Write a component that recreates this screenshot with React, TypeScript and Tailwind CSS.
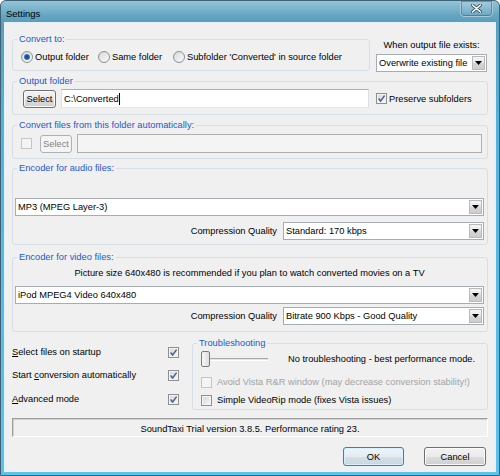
import React from "react";

/* ── small Vista-style controls ── */
function Check({
  checked = false,
  disabled = false,
  className = "",
}: {
  checked?: boolean;
  disabled?: boolean;
  className?: string;
}) {
  return (
    <span
      className={`w-[11px] h-[11px] shrink-0 flex items-center justify-center border ${
        disabled
          ? "border-[#c6c6c6] bg-[#f4f4f4]"
          : "border-[#8e8f8f] bg-[linear-gradient(135deg,#d3d6db,#f7f7f7)] shadow-[inset_0_0_0_1px_#f4f4f4]"
      } ${className}`}
    >
      {checked && (
        <svg width="9" height="9" viewBox="0 0 9 9">
          <path
            d="M1.6 4.6 L3.6 7 L7.6 1.6"
            fill="none"
            stroke="#4b5f8d"
            strokeWidth="1.5"
          />
        </svg>
      )}
    </span>
  );
}

function Radio({ checked = false }: { checked?: boolean }) {
  return (
    <span className="w-[12px] h-[12px] shrink-0 rounded-full border border-[#8e8f8f] bg-[linear-gradient(135deg,#d5d8dd,#fbfbfb)] flex items-center justify-center">
      {checked && (
        <span className="w-[6px] h-[6px] rounded-full bg-[radial-gradient(circle,#0f3f86_0%,#2a67b4_55%,#8cc3e8_100%)]" />
      )}
    </span>
  );
}

function Combo({ value, className = "" }: { value: string; className?: string }) {
  return (
    <div
      className={`h-[18px] flex items-center bg-white border border-[#a5acb5] ${className}`}
    >
      <span className="flex-1 pl-[2px] whitespace-nowrap">{value}</span>
      <span className="w-[13px] h-[14px] mr-[1px] shrink-0 flex items-center justify-center border border-[#b9b9b9] bg-[linear-gradient(180deg,#f5f5f5_0%,#e6e6e6_50%,#d6d6d6_50%,#cdcdcd_100%)]">
        <svg width="7" height="4" viewBox="0 0 7 4">
          <path d="M0 0h7L3.5 4z" fill="#000" />
        </svg>
      </span>
    </div>
  );
}

function Btn({
  children,
  className = "",
  disabled = false,
  primary = false,
}: {
  children: React.ReactNode;
  className?: string;
  disabled?: boolean;
  primary?: boolean;
}) {
  const look = disabled
    ? "border-[#adb2b5] bg-[#f4f4f4] text-[#838383]"
    : primary
      ? "border-[#3c7fb1] bg-[linear-gradient(180deg,#eef4f8_0%,#e5ecf1_50%,#d6e1e9_50%,#c9d6df_100%)] shadow-[inset_0_0_0_1px_#d8f0fc]"
      : "border-[#707070] bg-[linear-gradient(180deg,#f2f2f2_0%,#ebebeb_50%,#dddddd_50%,#cfcfcf_100%)] shadow-[inset_0_0_0_1px_#fbfbfb]";
  return (
    <div
      className={`shrink-0 flex items-center justify-center rounded-[3px] border ${look} ${className}`}
    >
      {children}
    </div>
  );
}

function Group({
  label,
  className = "",
  children,
}: {
  label: string;
  className?: string;
  children?: React.ReactNode;
}) {
  return (
    <fieldset className={`border border-[#d5dfe5] rounded-[3px] min-w-0 ${className}`}>
      <legend className="ml-[4px] px-[2px] leading-[12px] text-[#1d58d0]">{label}</legend>
      {children}
    </fieldset>
  );
}

function CloseButton() {
  return (
    <div className="-mt-[1px] w-[33px] h-[17px] rounded-b-[4px] border border-[#a7cad9] shadow-[inset_0_0_0_1px_rgba(40,80,100,0.45)] bg-[linear-gradient(180deg,rgba(255,255,255,0.15),rgba(255,255,255,0.03))] flex items-center justify-center">
      <svg width="11" height="9" viewBox="0 0 11 9">
        <path
          d="M1.5 1 L9.5 8 M9.5 1 L1.5 8"
          stroke="#3a4e5a"
          strokeWidth="3.2"
          strokeLinecap="round"
        />
        <path
          d="M1.5 1 L9.5 8 M9.5 1 L1.5 8"
          stroke="#ffffff"
          strokeWidth="1.6"
          strokeLinecap="round"
        />
      </svg>
    </div>
  );
}

export default function App() {
  return (
    <div className="w-[500px] h-[476px] flex flex-col border border-[#3d6275] rounded-t-[6px] overflow-hidden bg-[linear-gradient(180deg,#7ab4cd_0px,#5a9ebd_21px,#56b2dc_120px,#5cc3ee_476px)] font-['Liberation_Sans',Arial,sans-serif] text-[9.3px] leading-[12px] text-black">
      {/* Title bar */}
      <div className="h-[21px] shrink-0 flex items-start justify-between pl-[5px] pr-[6px] bg-[linear-gradient(180deg,rgba(255,255,255,0.2),rgba(255,255,255,0)_70%)]">
        <span className="mt-[7px] text-[9.5px]">Settings</span>
        <CloseButton />
      </div>

      {/* Client area */}
      <div className="mx-[3px] mb-[3px] flex-1 bg-[#f0f0f0] border border-[#e4f1f7] flex flex-col px-[7px]">
        {/* Convert to + overwrite */}
        <div className="mt-[10px] flex items-start">
          <Group label="Convert to:" className="w-[358px] h-[38px]">
            <div className="mt-[5px] h-[13px] pl-[8px] flex items-center">
              <div className="w-[77px] flex items-center gap-[2px]">
                <Radio checked />
                <span>Output folder</span>
              </div>
              <div className="w-[75px] flex items-center gap-[2px]">
                <Radio />
                <span>Same folder</span>
              </div>
              <div className="flex items-center gap-[2px]">
                <Radio />
                <span>Subfolder 'Converted' in source folder</span>
              </div>
            </div>
          </Group>
          <div className="ml-[6px] w-[111px] flex flex-col">
            <div className="mt-[6px] text-center">When output file exists:</div>
            <Combo className="mt-[3px]" value="Overwrite existing file" />
          </div>
        </div>

        {/* Output folder */}
        <Group label="Output folder" className="mt-[3px] h-[40px]">
          <div className="mt-[2px] pl-[10px] h-[19px] flex items-center">
            <Btn className="w-[33px] h-[18px]">Select</Btn>
            <div className="ml-[5px] w-[308px] h-[19px] flex items-center pl-[2px] bg-white border border-[#abadb3] border-x-[#dbdfe6] border-b-[#e3e9ef]">
              <span>C:\Converted</span>
              <span className="w-[1px] h-[12px] bg-black" />
            </div>
            <Check checked className="ml-[7px]" />
            <span className="ml-[2px]">Preserve subfolders</span>
          </div>
        </Group>

        {/* Watch folder */}
        <Group label="Convert files from this folder automatically:" className="mt-[4px] h-[40px]">
          <div className="mt-[3px] pl-[8px] h-[19px] flex items-center">
            <Check disabled />
            <Btn disabled className="ml-[8px] w-[32px] h-[18px]">
              Select
            </Btn>
            <div className="ml-[5px] w-[405px] h-[19px] bg-[#f4f4f4] border border-[#afafaf]" />
          </div>
        </Group>

        {/* Audio encoder */}
        <Group label="Encoder for audio files:" className="mt-[3px] h-[83px]">
          <div className="pt-[24px] pl-[2px] pr-[3px]">
            <Combo value="MP3 (MPEG Layer-3)" />
            <div className="mt-[6px] flex items-center justify-end gap-[6px]">
              <span>Compression Quality</span>
              <Combo className="w-[201px]" value="Standard: 170 kbps" />
            </div>
          </div>
        </Group>

        {/* Video encoder */}
        <Group label="Encoder for video files:" className="mt-[6px] h-[81px]">
          <div className="pl-[2px] pr-[3px]">
            <div className="mt-[4px] text-center">
              Picture size 640x480 is recommended if you plan to watch converted movies on a TV
            </div>
            <Combo className="mt-[7px]" value="iPod MPEG4 Video 640x480" />
            <div className="mt-[3px] flex items-center justify-end gap-[6px]">
              <span>Compression Quality</span>
              <Combo className="w-[201px]" value="Bitrate 900 Kbps - Good Quality" />
            </div>
          </div>
        </Group>

        {/* Options + troubleshooting */}
        <div className="flex items-start">
          <div className="w-[167px] flex flex-col">
            <div className="mt-[14px] h-[12px] flex items-center justify-between">
              <span>
                <u>S</u>elect files on startup
              </span>
              <Check checked />
            </div>
            <div className="mt-[11px] h-[12px] flex items-center justify-between">
              <span>
                Start <u>c</u>onversion automatically
              </span>
              <Check checked />
            </div>
            <div className="mt-[12px] h-[12px] flex items-center justify-between">
              <span>
                <u>A</u>dvanced mode
              </span>
              <Check checked />
            </div>
          </div>

          <Group label="Troubleshooting" className="ml-[13px] mt-[5px] w-[296px] h-[73px]">
            <div className="pl-[8px] pt-[2px]">
              <div className="h-[16px] flex items-center">
                <span className="w-[9px] h-[16px] shrink-0 rounded-[2px] border border-[#7a7a7a] bg-[linear-gradient(90deg,#f6f6f6,#dedede)]" />
                <span className="w-[58px] h-[3px] border-t border-[#a8a8a8] border-b border-b-white bg-[#e3e3e3]" />
                <span className="ml-[20px]">No troubleshooting - best performance mode.</span>
              </div>
              <div className="mt-[9px] h-[12px] flex items-center text-[#a3a3a3]">
                <Check disabled />
                <span className="ml-[5px]">
                  Avoid Vista R&amp;R window (may decrease conversion stability!)
                </span>
              </div>
              <div className="mt-[6px] h-[12px] flex items-center">
                <Check />
                <span className="ml-[5px]">Simple VideoRip mode (fixes Vista issues)</span>
              </div>
            </div>
          </Group>
        </div>

        {/* Status */}
        <div className="mt-[8px] h-[19px] pt-[4px] text-center border border-t-[#9d9d9d] border-l-[#9d9d9d] border-r-white border-b-white shadow-[inset_1px_1px_0_#d0d0d0]">
          SoundTaxi Trial version 3.8.5. Performance rating 23.
        </div>

        {/* Buttons */}
        <div className="mt-[10px] pr-[2px] flex justify-end gap-[20px]">
          <Btn primary className="w-[61px] h-[19px]">
            OK
          </Btn>
          <Btn className="w-[62px] h-[19px]">Cancel</Btn>
        </div>
      </div>
    </div>
  );
}
